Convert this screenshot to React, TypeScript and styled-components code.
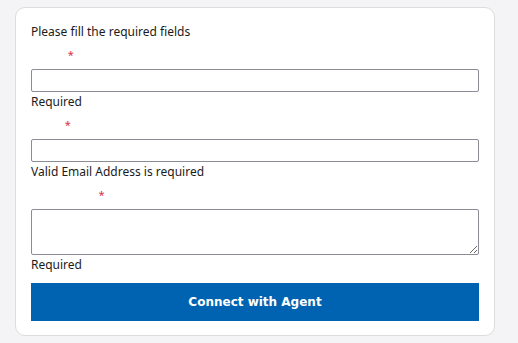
import React from "react";
import styled, { createGlobalStyle } from "styled-components";

const GlobalStyle = createGlobalStyle`
  html, body {
    margin: 0;
    padding: 0;
    background: #f4f4f6;
  }
  body {
    font-family: "Noto Sans", "Open Sans", sans-serif;
    font-size: 12px;
    color: #1b1b1b;
  }
`;

const Page = styled.div`
  padding: 7px 23px 7px 15px;
`;

const Card = styled.form`
  background: #fff;
  border: 1px solid #dcdcdf;
  border-radius: 10px;
  padding: 15px 15px 14px 15px;
  display: flex;
  flex-direction: column;
`;

const Intro = styled.div`
  line-height: 18px;
  margin-bottom: 7px;
`;

const Field = styled.div`
  display: flex;
  flex-direction: column;
  margin-bottom: 7px;
`;

const Label = styled.label`
  line-height: 18px;
  margin-bottom: 3px;
  color: #fff;
  display: flex;
  align-items: flex-start;
`;

const Star = styled.span`
  color: #d9304a;
  font-size: 11px;
  line-height: 14px;
  margin-left: 3px;
`;

const Input = styled.input`
  box-sizing: border-box;
  height: 23px;
  width: 100%;
  margin: 0;
  border: 1px solid #8c8c96;
  border-radius: 2px;
  font: inherit;
  padding: 0 6px;
`;

const TextArea = styled.textarea`
  box-sizing: border-box;
  height: 46px;
  width: 100%;
  margin: 0;
  border: 1px solid #8c8c96;
  border-radius: 2px;
  font: inherit;
  padding: 4px 6px;
  display: block;
`;

const Error = styled.div`
  line-height: 18px;
  padding-top: 1px;
`;

const Submit = styled.button`
  margin-top: 2px;
  height: 38px;
  border: none;
  background: #0063b1;
  color: #fff;
  font-family: "DejaVu Sans", Verdana, sans-serif;
  font-weight: bold;
  font-size: 12px;
  cursor: pointer;
`;

export default function App() {
  return (
    <>
      <GlobalStyle />
      <Page>
        <Card onSubmit={(e) => e.preventDefault()}>
          <Intro>Please fill the required fields</Intro>
          <Field>
            <Label>
              Name<Star>*</Star>
            </Label>
            <Input type="text" />
            <Error>Required</Error>
          </Field>
          <Field>
            <Label>
              Email<Star>*</Star>
            </Label>
            <Input type="email" />
            <Error>Valid Email Address is required</Error>
          </Field>
          <Field>
            <Label>
              Description<Star>*</Star>
            </Label>
            <TextArea />
            <Error>Required</Error>
          </Field>
          <Submit type="submit">Connect with Agent</Submit>
        </Card>
      </Page>
    </>
  );
}
